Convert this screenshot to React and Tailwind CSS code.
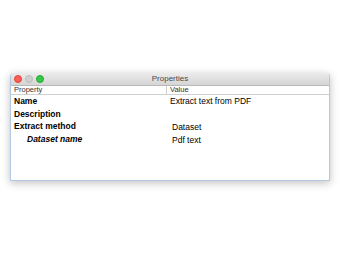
import React from 'react';

const rows = [
  { label: 'Name', value: 'Extract text from PDF', indent: false, offset: false },
  { label: 'Description', value: '', indent: false, offset: false },
  { label: 'Extract method', value: 'Dataset', indent: false, offset: true },
  { label: 'Dataset name', value: 'Pdf text', indent: true, offset: true },
];

const App = () => {
  return (
    <div className="w-[340px] h-[260px] bg-white pt-[73px] pl-[10px]" style={{ fontFamily: '"Liberation Sans", Arial, sans-serif' }}>
      <div className="w-[320px] h-[108px] flex flex-col bg-white rounded-t-[4px] shadow-[0_2px_8px_rgba(0,0,0,0.25)] border-x border-b border-[#b4c8e2] overflow-hidden">
        <div className="relative h-[13px] shrink-0 flex items-center justify-center bg-gradient-to-b from-[#ebebeb] to-[#d5d5d5] border-b border-[#b9b9b9]">
          <div className="absolute left-[3px] top-[2px] flex gap-[3px]">
            <span className="w-[8px] h-[8px] rounded-full bg-[#fc5f57] border border-[#e0443e]" />
            <span className="w-[8px] h-[8px] rounded-full bg-[#d0d0d0] border border-[#bdbdbd]" />
            <span className="w-[8px] h-[8px] rounded-full bg-[#35c84a] border border-[#27aa35]" />
          </div>
          <span className="text-[8px] leading-none text-[#4a4a4a]">Properties</span>
        </div>
        <div className="flex h-[9px] shrink-0 items-center text-[7.5px] leading-none text-[#333] border-b border-[#d0d0d0]">
          <div className="w-[156px] pl-[3px] border-r border-[#d0d0d0] h-full flex items-center">Property</div>
          <div className="pl-[3px]">Value</div>
        </div>
        <div className="flex flex-col">
          {rows.map((r) => (
            <div key={r.label} className="flex h-[12.5px] items-center text-[8.5px] leading-none text-black">
              <div className={`w-[156px] font-bold ${r.indent ? 'pl-[16px] italic' : 'pl-[3px]'}`}>{r.label}</div>
              <div className={`${r.offset ? 'pl-[5px] pt-[2px]' : 'pl-[3px]'}`}>{r.value}</div>
            </div>
          ))}
        </div>
      </div>
    </div>
  );
};

export default App;
